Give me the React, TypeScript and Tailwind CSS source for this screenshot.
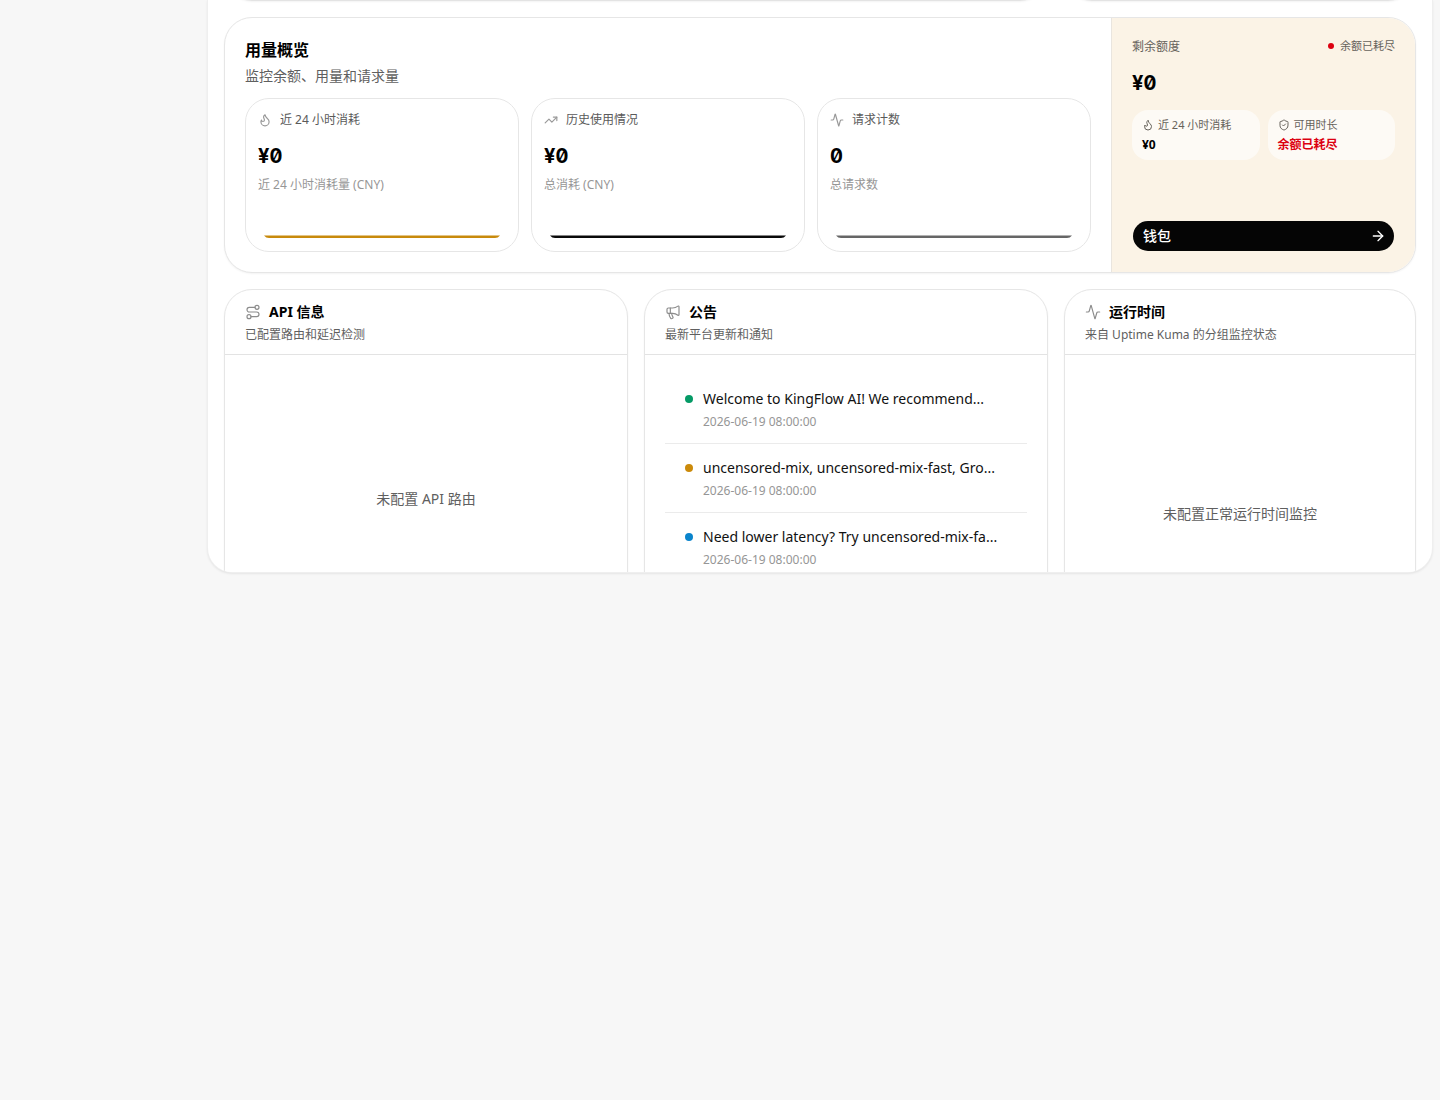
import type { ReactNode } from 'react';
import {
  Activity,
  ArrowRight,
  Flame,
  Megaphone,
  Route,
  ShieldCheck,
  TrendingUp,
  type LucideIcon,
} from 'lucide-react';

const stats = [
  {
    label: '近 24 小时消耗',
    value: '¥0',
    hint: '近 24 小时消耗量 (CNY)',
    icon: Flame,
    line: 'text-[#c88a0c]',
  },
  {
    label: '历史使用情况',
    value: '¥0',
    hint: '总消耗 (CNY)',
    icon: TrendingUp,
    line: 'text-[#0a0a0a]',
  },
  {
    label: '请求计数',
    value: '0',
    hint: '总请求数',
    icon: Activity,
    line: 'text-[#666666]',
  },
];

const notices = [
  {
    title: 'Welcome to KingFlow AI! We recommend...',
    time: '2026-06-19 08:00:00',
    dot: 'bg-[#059a66]',
  },
  {
    title: 'uncensored-mix, uncensored-mix-fast, Gro...',
    time: '2026-06-19 08:00:00',
    dot: 'bg-[#cb8a0a]',
  },
  {
    title: 'Need lower latency? Try uncensored-mix-fa...',
    time: '2026-06-19 08:00:00',
    dot: 'bg-[#0a84cc]',
  },
];

function UsageOverview() {
  return (
    <section className="flex overflow-hidden rounded-[28px] border border-[#e6e6e6] bg-white shadow-xs">
      <div className="min-w-0 flex-1 p-5">
        <h2 className="text-base leading-6 font-bold text-black">用量概览</h2>
        <p className="mt-1 text-sm leading-5 text-[#5f5f5f]">监控余额、用量和请求量</p>
        <div className="mt-3 grid grid-cols-3 gap-3">
          {stats.map((item) => (
            <div
              key={item.label}
              className="flex h-[154px] flex-col rounded-3xl border border-[#e6e6e6] px-3 pt-3"
            >
              <div className="flex items-center gap-2 text-xs leading-[18px] text-[#5a5a5a]">
                <item.icon className="size-3.5 text-[#999999]" />
                {item.label}
              </div>
              <div className="mt-3 font-['Inter',sans-serif] text-xl leading-[30px] font-bold text-black slashed-zero tabular-nums">
                {item.value}
              </div>
              <p className="mt-1.5 text-xs leading-4 text-[#969696]">{item.hint}</p>
              {/* Flat sparkline, clipped by the rounded chart area */}
              <svg
                className={`mt-auto mb-3 h-1 w-full px-1.5 ${item.line}`}
                viewBox="0 0 236 4"
                preserveAspectRatio="none"
                aria-hidden="true"
              >
                <path d="M0 0.5H236Q234 3 231 3H5Q2 3 0 0.5Z" fill="currentColor" />
              </svg>
            </div>
          ))}
        </div>
      </div>

      <aside className="flex w-[304px] shrink-0 flex-col border-l border-[#e9e5df] bg-[#fbf3e6] px-5 pt-5 pb-[21px]">
        <div className="flex items-start justify-between text-[#66625b]">
          <span className="text-xs leading-[18px]">剩余额度</span>
          <span className="flex items-center gap-1.5 text-[11px] leading-4">
            <span className="size-1.5 rounded-full bg-[#dc0010]" />
            余额已耗尽
          </span>
        </div>
        <div className="mt-3 font-['Inter',sans-serif] text-xl leading-[30px] font-bold text-black slashed-zero tabular-nums">
          ¥0
        </div>
        <div className="mt-3 grid grid-cols-2 gap-2">
          <div className="rounded-2xl bg-[#fdfaf5] px-2.5 py-1.5">
            <div className="flex items-center gap-1 text-[11px] leading-[18px] text-[#66625b]">
              <Flame className="size-3" />近 24 小时消耗
            </div>
            <div className="mt-0.5 text-xs leading-[18px] font-bold text-black">¥0</div>
          </div>
          <div className="rounded-2xl bg-[#fdfaf5] px-2.5 py-1.5">
            <div className="flex items-center gap-1 text-[11px] leading-[18px] text-[#66625b]">
              <ShieldCheck className="size-3" />
              可用时长
            </div>
            <div className="mt-0.5 text-xs leading-[18px] font-bold text-[#dc0010]">余额已耗尽</div>
          </div>
        </div>
        <a
          href="#wallet"
          className="mx-px mt-auto flex h-[30px] items-center justify-between rounded-full bg-[#050505] pr-2 pl-2.5 text-sm font-medium text-white"
        >
          钱包
          <ArrowRight className="size-4" />
        </a>
      </aside>
    </section>
  );
}

type PanelProps = {
  icon: LucideIcon;
  title: string;
  desc: string;
  children: ReactNode;
};

function Panel({ icon: Icon, title, desc, children }: PanelProps) {
  return (
    <section className="flex h-96 min-w-0 flex-col rounded-[28px] border border-[#e6e6e6] bg-white shadow-xs">
      <header className="border-b border-[#e3e3e3] px-5 pt-3 pb-2.5">
        <h3 className="flex items-center gap-2 text-sm leading-5 font-bold text-black">
          <Icon className="size-4 text-[#8c8c8c]" strokeWidth={1.75} />
          {title}
        </h3>
        <p className="mt-1 text-xs leading-[18px] text-[#5f5f5f]">{desc}</p>
      </header>
      {children}
    </section>
  );
}

export default function App() {
  return (
    <div className="min-h-screen bg-[#f7f7f7] pr-2 pl-52 font-['Noto_Sans','Noto_Sans_CJK_SC',sans-serif]">
      <main className="h-[572px] overflow-hidden rounded-b-3xl bg-white px-4 shadow-[0_0_0_1px_#efefef,0_1px_3px_#00000026]">
        {/* Lower edge of the cards scrolled out of view */}
        <div className="-mt-24 grid grid-cols-[101fr_101fr_88fr] gap-4">
          <div className="col-span-2 h-[97px] rounded-[28px] border border-[#e3e3e3] shadow-xs" />
          <div className="h-[97px] rounded-[28px] border border-[#e3e3e3] shadow-xs" />
        </div>

        <div className="mt-4">
          <UsageOverview />
        </div>

        <div className="mt-4 grid grid-cols-[101fr_101fr_88fr] gap-4">
          <Panel icon={Route} title="API 信息" desc="已配置路由和延迟检测">
            <div className="flex h-72 items-center justify-center text-sm text-[#5f5f5f]">
              未配置 API 路由
            </div>
          </Panel>

          <Panel icon={Megaphone} title="公告" desc="最新平台更新和通知">
            <ul className="divide-y divide-[#ebebeb] px-5 pt-5">
              {notices.map((item) => (
                <li key={item.title} className="flex gap-2.5 px-5 py-3">
                  <span className={`mt-2 size-2 shrink-0 rounded-full ${item.dot}`} />
                  <div className="min-w-0">
                    <p className="text-sm leading-6 whitespace-nowrap text-[#111111]">{item.title}</p>
                    <time className="mt-0.5 block text-xs leading-[18px] text-[#969696]">{item.time}</time>
                  </div>
                </li>
              ))}
            </ul>
          </Panel>

          <Panel icon={Activity} title="运行时间" desc="来自 Uptime Kuma 的分组监控状态">
            <div className="flex h-80 items-center justify-center text-sm text-[#5f5f5f]">
              未配置正常运行时间监控
            </div>
          </Panel>
        </div>
      </main>
    </div>
  );
}
